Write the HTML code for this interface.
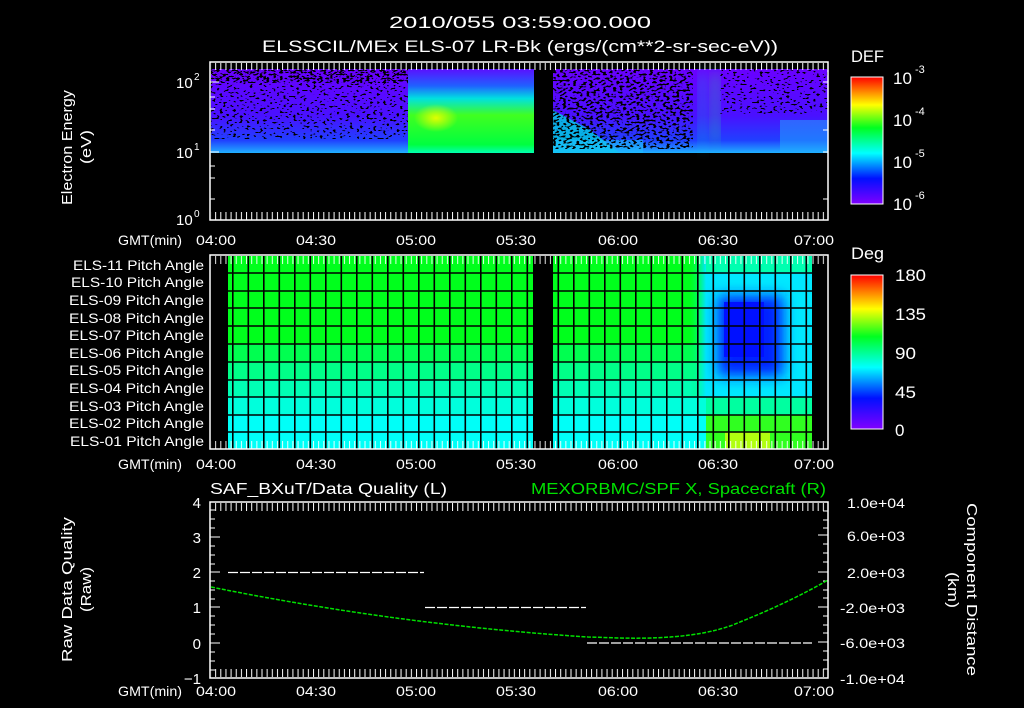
<!DOCTYPE html>
<html><head><style>
html,body{margin:0;padding:0;background:#000;width:1024px;height:708px;overflow:hidden}
svg{display:block}
text{font-family:"Liberation Sans",sans-serif;fill:#fff}
</style></head><body>
<svg width="1024" height="708" viewBox="0 0 1024 708" font-size="14">
<defs>
<filter id="nz" x="0" y="0" width="100%" height="100%">
<feTurbulence type="fractalNoise" baseFrequency="0.3 0.5" numOctaves="1" seed="3" result="t"/>
<feColorMatrix in="t" type="matrix" values="0 0 0 0 0  0 0 0 0 0  0 0 0 0 0  0 0 0 20 -12.2" />
</filter>
<filter id="nz2" x="0" y="0" width="100%" height="100%">
<feTurbulence type="fractalNoise" baseFrequency="0.3 0.5" numOctaves="1" seed="7" result="t"/>
<feColorMatrix in="t" type="matrix" values="0 0 0 0 0  0 0 0 0 0  0 0 0 0 0  0 0 0 16 -8.6" />
</filter>
<filter id="bl" x="-50%" y="-50%" width="200%" height="200%"><feGaussianBlur stdDeviation="7"/></filter>
<linearGradient id="lb" x1="0" y1="0" x2="0" y2="1">
<stop offset="0" stop-color="#6a00ff"/><stop offset="0.55" stop-color="#4a10ff"/><stop offset="0.85" stop-color="#2040ff"/><stop offset="1" stop-color="#20b0ff"/></linearGradient>
<linearGradient id="gb" x1="0" y1="0" x2="0" y2="1">
<stop offset="0" stop-color="#5a10ff"/><stop offset="0.2" stop-color="#2060ff"/><stop offset="0.35" stop-color="#00e0e0"/><stop offset="0.55" stop-color="#40ff20"/><stop offset="0.9" stop-color="#00ff40"/><stop offset="1" stop-color="#00ffb0"/></linearGradient>
<radialGradient id="yel" cx="0.5" cy="0.5" r="0.5"><stop offset="0" stop-color="#e0ff00"/><stop offset="1" stop-color="#e0ff00" stop-opacity="0"/></radialGradient>
<linearGradient id="cb1" x1="0" y1="1" x2="0" y2="0">
<stop offset="0" stop-color="#8000ff"/><stop offset="0.2" stop-color="#0010ff"/><stop offset="0.4" stop-color="#00ffff"/><stop offset="0.6" stop-color="#00ff20"/><stop offset="0.78" stop-color="#ffff00"/><stop offset="1" stop-color="#ff0000"/></linearGradient>
<linearGradient id="tr" x1="0" y1="0" x2="1" y2="0"><stop offset="0" stop-color="#00ff60" stop-opacity="0"/><stop offset="1" stop-color="#00e8ff"/></linearGradient>
<pattern id="vg" x="228" y="0" width="15.5" height="708" patternUnits="userSpaceOnUse"><rect x="4" y="0" width="1.6" height="708" fill="#000"/></pattern>
<pattern id="tk" x="210" y="0" width="5.15" height="10" patternUnits="userSpaceOnUse"><rect x="0" y="0" width="1" height="10" fill="#fff"/></pattern>
</defs>

<text x="389" y="28" font-size="17" textLength="262" lengthAdjust="spacingAndGlyphs">2010/055 03:59:00.000</text>
<text x="262" y="52" font-size="17" textLength="516" lengthAdjust="spacingAndGlyphs">ELSSCIL/MEx ELS-07 LR-Bk  (ergs/(cm**2-sr-sec-eV))</text>

<!-- Panel 1 -->
<rect x="211" y="69" width="197" height="84" fill="url(#lb)"/>
<rect x="408" y="69" width="126" height="84" fill="url(#gb)"/>
<ellipse cx="436" cy="118" rx="22" ry="14" fill="url(#yel)"/>
<rect x="553" y="69" width="275" height="84" fill="url(#lb)"/>
<polygon points="553,110 590,130 620,153 553,153" fill="#00d0e0" opacity="0.8"/>
<rect x="553" y="140" width="90" height="13" fill="#20c0ff" opacity="0.6"/>
<rect x="700" y="72" width="6" height="75" fill="#00e0d0" opacity="0.5" filter="url(#bl)"/>
<rect x="712" y="72" width="6" height="70" fill="#20ff90" opacity="0.6" filter="url(#bl)"/>
<rect x="780" y="120" width="48" height="33" fill="#20b0ff" opacity="0.5"/>
<rect x="211" y="69" width="197" height="70" filter="url(#nz)"/>
<rect x="211" y="69" width="197" height="14" filter="url(#nz2)"/>
<rect x="553" y="69" width="140" height="80" filter="url(#nz2)"/>
<rect x="720" y="69" width="108" height="45" filter="url(#nz)"/>
<rect x="210" y="62" width="618" height="158" fill="none" stroke="#fff" stroke-width="1.5"/>
<rect x="211" y="63" width="616" height="7" fill="url(#tk)"/>
<rect x="211" y="212" width="616" height="8" fill="url(#tk)"/>
<text x="176" y="88" font-size="15">10</text><text x="194" y="80" font-size="10">2</text>
<text x="176" y="158" font-size="15">10</text><text x="194" y="150" font-size="10">1</text>
<text x="176" y="225" font-size="15">10</text><text x="194" y="217" font-size="10">0</text>
<g stroke="#fff" stroke-width="1"><path d="M210 82h9M210 152h9M210 220h9M210 97h5M210 109h5M210 130h5M210 166h5M210 178h5M210 199h5M823 82h5M823 152h5M823 130h5M823 199h5"/></g>
<text transform="translate(72,205) rotate(-90)" font-size="15" textLength="115" lengthAdjust="spacingAndGlyphs">Electron Energy</text>
<text transform="translate(91,164) rotate(-90)" font-size="15" textLength="34" lengthAdjust="spacingAndGlyphs">(eV)</text>
<g font-size="14"><text x="118" y="245" textLength="64" lengthAdjust="spacingAndGlyphs">GMT(min)</text>
<text x="196" y="245" textLength="40" lengthAdjust="spacingAndGlyphs">04:00</text><text x="296" y="245" textLength="40" lengthAdjust="spacingAndGlyphs">04:30</text><text x="396" y="245" textLength="40" lengthAdjust="spacingAndGlyphs">05:00</text><text x="496" y="245" textLength="40" lengthAdjust="spacingAndGlyphs">05:30</text><text x="598" y="245" textLength="40" lengthAdjust="spacingAndGlyphs">06:00</text><text x="698" y="245" textLength="40" lengthAdjust="spacingAndGlyphs">06:30</text><text x="794" y="245" textLength="40" lengthAdjust="spacingAndGlyphs">07:00</text></g>

<rect x="851" y="77" width="32" height="127" fill="url(#cb1)" stroke="#fff"/>
<text x="851" y="62" font-size="17" textLength="33" lengthAdjust="spacingAndGlyphs">DEF</text>
<g font-size="17"><text x="893" y="84">10</text><text x="915" y="73" font-size="11">-3</text>
<text x="893" y="126">10</text><text x="915" y="115" font-size="11">-4</text>
<text x="893" y="168">10</text><text x="915" y="157" font-size="11">-5</text>
<text x="893" y="210">10</text><text x="915" y="199" font-size="11">-6</text></g>

<!-- Panel 2 -->
<g>
<rect x="228" y="256" width="305" height="88" fill="#00ff1c"/>
<rect x="553" y="256" width="259" height="88" fill="#00ff1c"/>
<rect x="228" y="344" width="305" height="18" fill="#00ff50"/><rect x="553" y="344" width="259" height="18" fill="#00ff50"/>
<rect x="228" y="362" width="305" height="18" fill="#00ff88"/><rect x="553" y="362" width="259" height="18" fill="#00ff88"/>
<rect x="228" y="380" width="305" height="17" fill="#00ffb4"/><rect x="553" y="380" width="259" height="17" fill="#00ffb4"/>
<rect x="228" y="397" width="305" height="18" fill="#00ffdc"/><rect x="553" y="397" width="259" height="18" fill="#00ffdc"/>
<rect x="228" y="415" width="305" height="34" fill="#00fff8"/><rect x="553" y="415" width="259" height="34" fill="#00fff8"/>
<rect x="706" y="256" width="106" height="142" fill="#00e8ff"/>
<rect x="690" y="256" width="16" height="142" fill="url(#tr)"/>
<rect x="706" y="256" width="106" height="16" fill="#00ffb0"/>
<rect x="718" y="296" width="65" height="80" fill="#0020ff" filter="url(#bl)"/>
<rect x="724" y="302" width="40" height="55" fill="#0010ff"/>
<rect x="706" y="397" width="106" height="18" fill="#00ffa0"/>
<rect x="706" y="415" width="106" height="34" fill="#30ff20"/>
<rect x="725" y="432" width="45" height="17" fill="#b0ff10"/>
<rect x="200" y="250" width="640" height="210" fill="url(#vg)"/>
<g stroke="#000" stroke-width="1.6"><path d="M228 273h584M228 291h584M228 308h584M228 326h584M228 344h584M228 362h584M228 380h584M228 397h584M228 415h584M228 432h584"/></g>
<rect x="533" y="255" width="20" height="195" fill="#000"/>
<rect x="812" y="255" width="16" height="195" fill="#000"/>
<rect x="210" y="255" width="18" height="195" fill="#000"/>
</g>
<rect x="210" y="255" width="618" height="194" fill="none" stroke="#fff" stroke-width="1.5"/>
<rect x="211" y="256" width="616" height="8" fill="url(#tk)" opacity="0.9"/>
<rect x="211" y="441" width="616" height="8" fill="url(#tk)" opacity="0.9"/>
<g font-size="14">
<text x="73" y="270" textLength="131" lengthAdjust="spacingAndGlyphs">ELS-11 Pitch Angle</text><text x="71" y="287" textLength="133" lengthAdjust="spacingAndGlyphs">ELS-10 Pitch Angle</text><text x="69" y="305" textLength="135" lengthAdjust="spacingAndGlyphs">ELS-09 Pitch Angle</text><text x="69" y="323" textLength="135" lengthAdjust="spacingAndGlyphs">ELS-08 Pitch Angle</text><text x="69" y="340" textLength="135" lengthAdjust="spacingAndGlyphs">ELS-07 Pitch Angle</text><text x="69" y="358" textLength="135" lengthAdjust="spacingAndGlyphs">ELS-06 Pitch Angle</text><text x="69" y="375" textLength="135" lengthAdjust="spacingAndGlyphs">ELS-05 Pitch Angle</text><text x="69" y="393" textLength="135" lengthAdjust="spacingAndGlyphs">ELS-04 Pitch Angle</text><text x="69" y="411" textLength="135" lengthAdjust="spacingAndGlyphs">ELS-03 Pitch Angle</text><text x="69" y="428" textLength="135" lengthAdjust="spacingAndGlyphs">ELS-02 Pitch Angle</text><text x="70" y="446" textLength="134" lengthAdjust="spacingAndGlyphs">ELS-01 Pitch Angle</text></g>
<g font-size="14"><text x="118" y="469" textLength="64" lengthAdjust="spacingAndGlyphs">GMT(min)</text>
<text x="196" y="469" textLength="40" lengthAdjust="spacingAndGlyphs">04:00</text><text x="296" y="469" textLength="40" lengthAdjust="spacingAndGlyphs">04:30</text><text x="396" y="469" textLength="40" lengthAdjust="spacingAndGlyphs">05:00</text><text x="496" y="469" textLength="40" lengthAdjust="spacingAndGlyphs">05:30</text><text x="598" y="469" textLength="40" lengthAdjust="spacingAndGlyphs">06:00</text><text x="698" y="469" textLength="40" lengthAdjust="spacingAndGlyphs">06:30</text><text x="794" y="469" textLength="40" lengthAdjust="spacingAndGlyphs">07:00</text></g>

<rect x="851" y="275" width="32" height="154" fill="url(#cb1)" stroke="#fff"/>
<text x="851" y="259" font-size="17" textLength="33" lengthAdjust="spacingAndGlyphs">Deg</text>
<g font-size="17"><text x="895" y="281" textLength="31" lengthAdjust="spacingAndGlyphs">180</text><text x="895" y="320" textLength="31" lengthAdjust="spacingAndGlyphs">135</text><text x="895" y="359" textLength="21" lengthAdjust="spacingAndGlyphs">90</text><text x="895" y="398" textLength="21" lengthAdjust="spacingAndGlyphs">45</text><text x="895" y="436">0</text></g>

<!-- Panel 3 -->
<text x="210" y="494" font-size="16" textLength="237" lengthAdjust="spacingAndGlyphs">SAF_BXuT/Data Quality (L)</text>
<text x="531" y="494" font-size="16" textLength="295" lengthAdjust="spacingAndGlyphs" style="fill:#00e000">MEXORBMC/SPF X, Spacecraft (R)</text>
<rect x="210" y="502" width="618" height="176" fill="none" stroke="#fff" stroke-width="1.5"/>
<rect x="211" y="503" width="616" height="8" fill="url(#tk)"/>
<rect x="211" y="669" width="616" height="8" fill="url(#tk)"/>
<g stroke="#fff" stroke-width="1"><path d="M210 502h10M210 537h10M210 572h10M210 607h10M210 643h10M210 678h10M210 510h5M210 519h5M210 528h5M210 546h5M210 555h5M210 564h5M210 581h5M210 590h5M210 599h5M210 616h5M210 625h5M210 634h5M210 652h5M210 661h5M210 670h5M818 502h10M818 535h10M818 572h10M818 607h10M818 642h10M818 678h10M823 511h5M823 520h5M823 528h5M823 544h5M823 553h5M823 562h5M823 581h5M823 590h5M823 598h5M823 616h5M823 625h5M823 633h5M823 651h5M823 660h5M823 669h5"/></g>
<g stroke="#fff" stroke-width="1.3" stroke-dasharray="10,2"><path d="M228 572.5H424M425 607.5H586M587 643H812"/></g>
<path d="M211 587 Q400 625 588 637 L620 638 Q700 640 740 622 Q790 602 828 580" fill="none" stroke="#00e000" stroke-width="1.5" stroke-dasharray="4,1.5"/>
<g font-size="15" text-anchor="end"><text x="201" y="508">4</text><text x="201" y="543">3</text><text x="201" y="578">2</text><text x="201" y="613">1</text><text x="201" y="649">0</text><text x="201" y="684">−1</text></g>
<g font-size="14"><text x="847" y="508" textLength="58" lengthAdjust="spacingAndGlyphs">1.0e+04</text><text x="847" y="541" textLength="58" lengthAdjust="spacingAndGlyphs">6.0e+03</text><text x="847" y="578" textLength="58" lengthAdjust="spacingAndGlyphs">2.0e+03</text><text x="840" y="613" textLength="65" lengthAdjust="spacingAndGlyphs">-2.0e+03</text><text x="840" y="648" textLength="65" lengthAdjust="spacingAndGlyphs">-6.0e+03</text><text x="840" y="684" textLength="65" lengthAdjust="spacingAndGlyphs">-1.0e+04</text></g>
<text transform="translate(72,662) rotate(-90)" font-size="15" textLength="145" lengthAdjust="spacingAndGlyphs">Raw Data Quality</text>
<text transform="translate(91,612) rotate(-90)" font-size="15" textLength="45" lengthAdjust="spacingAndGlyphs">(Raw)</text>
<text transform="translate(967,503) rotate(90)" font-size="15" textLength="173" lengthAdjust="spacingAndGlyphs">Component Distance</text>
<text transform="translate(948,572) rotate(90)" font-size="15" textLength="36" lengthAdjust="spacingAndGlyphs">(km)</text>
<g font-size="14"><text x="118" y="696" textLength="64" lengthAdjust="spacingAndGlyphs">GMT(min)</text>
<text x="196" y="696" textLength="40" lengthAdjust="spacingAndGlyphs">04:00</text><text x="296" y="696" textLength="40" lengthAdjust="spacingAndGlyphs">04:30</text><text x="396" y="696" textLength="40" lengthAdjust="spacingAndGlyphs">05:00</text><text x="496" y="696" textLength="40" lengthAdjust="spacingAndGlyphs">05:30</text><text x="598" y="696" textLength="40" lengthAdjust="spacingAndGlyphs">06:00</text><text x="698" y="696" textLength="40" lengthAdjust="spacingAndGlyphs">06:30</text><text x="794" y="696" textLength="40" lengthAdjust="spacingAndGlyphs">07:00</text></g>
</svg>
</body></html>
